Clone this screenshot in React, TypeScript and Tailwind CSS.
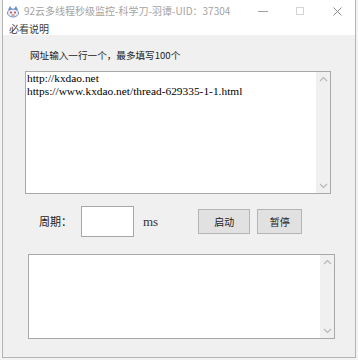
import React from 'react'

const ui = { fontFamily: '"Noto Sans CJK SC", "Liberation Sans", sans-serif' }
const song = { fontFamily: '"Liberation Serif", "Noto Sans CJK SC", serif' }

function ScrollTrack() {
  return (
    <div className="w-[14px] h-full bg-[#f0f0f0] flex flex-col items-center justify-between py-[4px]">
      <svg width="9" height="6" viewBox="0 0 9 6">
        <path d="M1 5 L4.5 1.5 L8 5" fill="none" stroke="#b8b8b8" strokeWidth="1.2" />
      </svg>
      <svg width="9" height="6" viewBox="0 0 9 6">
        <path d="M1 1 L4.5 4.5 L8 1" fill="none" stroke="#b8b8b8" strokeWidth="1.2" />
      </svg>
    </div>
  )
}

function AppIcon() {
  return (
    <svg width="14" height="14" viewBox="0 0 14 14">
      <path d="M2 6 L4 2 L6 5 L8 5 L10 2 L12 6 Z" fill="#6b8fc7" />
      <ellipse cx="7" cy="9" rx="5.5" ry="4" fill="#e8eef7" stroke="#6b8fc7" strokeWidth="1" />
      <circle cx="5" cy="8.5" r="0.9" fill="#c0392b" />
      <circle cx="9" cy="8.5" r="0.9" fill="#c0392b" />
      <path d="M5.5 11 L8.5 11" stroke="#c0392b" strokeWidth="0.8" />
    </svg>
  )
}

export default function App() {
  return (
    <div className="w-[358px] h-[360px] bg-[#f3f3f3] overflow-hidden" style={ui}>
      <div className="ml-[2px] w-[354px] h-[358px] border-l border-r border-b border-[#b4b4b4] flex flex-col">
        {/* title bar */}
        <div className="h-[22px] bg-white flex items-center">
          <div className="pl-[3px] pr-[4px] flex items-center">
            <AppIcon />
          </div>
          <div className="text-[10px] leading-none text-[#a3a3a3] whitespace-nowrap">
            92云多线程秒级监控-科学刀-羽谭-UID：37304
          </div>
          <div className="flex-1" />
          <div className="w-[36px] flex justify-center">
            <div className="w-[10px] h-px bg-[#a0a0a0]" />
          </div>
          <div className="w-[38px] flex justify-center">
            <div className="w-[8px] h-[8px] border border-[#d4d4d4]" />
          </div>
          <div className="w-[36px] flex justify-center">
            <svg width="9" height="9" viewBox="0 0 9 9">
              <path d="M0.5 0.5 L8.5 8.5 M8.5 0.5 L0.5 8.5" stroke="#8a8a8a" strokeWidth="1" />
            </svg>
          </div>
        </div>

        {/* menu */}
        <div className="h-[13px] bg-white flex items-center pl-[6px]">
          <div className="text-[10px] leading-none text-[#3a3a3a]">必看说明</div>
        </div>

        {/* client area */}
        <div className="flex-1 bg-[#f0f0f0] flex flex-col">
          <div className="h-[36px] pl-[27px] pt-[14px] text-[9.6px] leading-[12px] text-[#222]">
            网址输入一行一个，最多填写100个
          </div>

          <div className="ml-[22px] w-[306px] h-[123px] border border-[#a8a8a8] bg-white flex">
            <div className="flex-1 pl-[1px] text-[11.4px] leading-[12.5px] text-black" style={song}>
              <div>http://kxdao.net</div>
              <div>https://www.kxdao.net/thread-629335-1-1.html</div>
            </div>
            <ScrollTrack />
          </div>

          <div className="flex items-center mt-[12px] h-[31px]">
            <div className="ml-[36px] w-[42px] text-[11px] leading-none text-[#222]">周期：</div>
            <div className="w-[53px] h-[31px] bg-white border border-[#a8a8a8]" />
            <div className="ml-[9px] text-[13px] leading-none text-[#333]" style={song}>ms</div>
            <div className="ml-[40px] w-[52px] h-[25px] bg-[#e1e1e1] border border-[#b4b4b4] flex items-center justify-center text-[10px] text-[#222]">
              启动
            </div>
            <div className="ml-[7px] w-[45px] h-[25px] bg-[#e1e1e1] border border-[#b4b4b4] flex items-center justify-center text-[10px] text-[#222]">
              暂停
            </div>
          </div>

          <div className="ml-[25px] mt-[17px] w-[307px] h-[85px] border border-[#a8a8a8] bg-white flex">
            <div className="flex-1" />
            <ScrollTrack />
          </div>
        </div>
      </div>
    </div>
  )
}
